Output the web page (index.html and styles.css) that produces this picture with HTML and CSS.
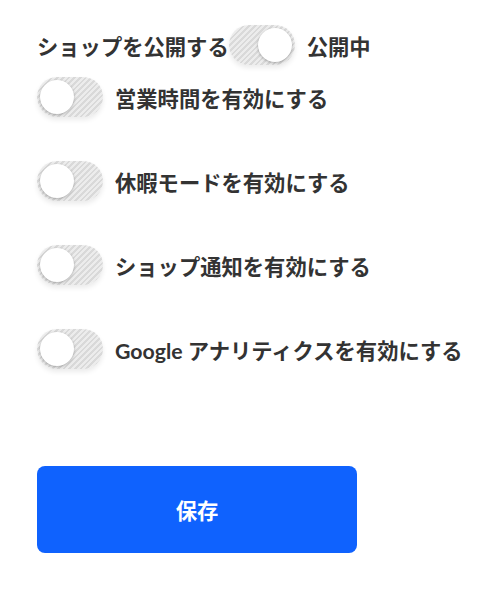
FILE: index.html
```html
<html>
<head>
  <title>ショップ設定</title>
  <link rel="stylesheet" href="styles.css">
</head>
<body>
<div class="settings">

  <!-- 公開 -->
  <div class="publish-row">
    <span class="label">ショップを公開する</span>
    <span class="toggle on"><span class="knob"></span></span>
    <span class="label status">公開中</span>
  </div>

  <!-- 各種設定 -->
  <div class="option-list">
    <div class="option">
      <span class="toggle"><span class="knob"></span></span>
      <span class="label">営業時間を有効にする</span>
    </div>
    <div class="option">
      <span class="toggle"><span class="knob"></span></span>
      <span class="label">休暇モードを有効にする</span>
    </div>
    <div class="option">
      <span class="toggle"><span class="knob"></span></span>
      <span class="label">ショップ通知を有効にする</span>
    </div>
    <div class="option">
      <span class="toggle"><span class="knob"></span></span>
      <span class="label">Google アナリティクスを有効にする</span>
    </div>
  </div>

  <button class="save-button">保存</button>
</div>
</body>
</html>
```

FILE: styles.css
```css
body {
  margin: 0;
  padding: 0;
  background-color: #fff;
  color: #333;
  font-family: Lato, "Noto Sans CJK JP", sans-serif;
}

.settings {
  display: flex;
  flex-direction: column;
  align-items: flex-start;
  padding: 25px 37px;
}

.label {
  font-size: 21.3px;
  font-weight: bold;
  white-space: nowrap;
}

.publish-row {
  display: flex;
  align-items: center;
}

.status {
  margin-left: 12px;
}

.option-list {
  display: flex;
  flex-direction: column;
  gap: 44px;
  margin-top: 12px;
}

.option {
  display: flex;
  align-items: center;
  gap: 12px;
}

/* переключатель */
.toggle {
  display: flex;
  align-items: center;
  flex-shrink: 0;
  width: 66px;
  height: 40px;
  padding: 0 3px;
  box-sizing: border-box;
  border-radius: 20px;
  background: repeating-linear-gradient(135deg, #ececec 0, #ececec 2px, #d9d9d9 2px, #d9d9d9 4px);
  box-shadow: 0 3px 5px rgba(0, 0, 0, 0.08);
}

.toggle.on {
  justify-content: flex-end;
}

.knob {
  width: 34px;
  height: 34px;
  border-radius: 50%;
  background-color: #fff;
  box-shadow: 0 1px 3px rgba(0, 0, 0, 0.28);
}

.save-button {
  margin-top: 97px;
  width: 320px;
  height: 87px;
  border: none;
  border-radius: 8px;
  background-color: #0f62fe;
  color: #fff;
  font-family: Lato, "Noto Sans CJK JP", sans-serif;
  font-size: 21.3px;
  font-weight: bold;
}
```
